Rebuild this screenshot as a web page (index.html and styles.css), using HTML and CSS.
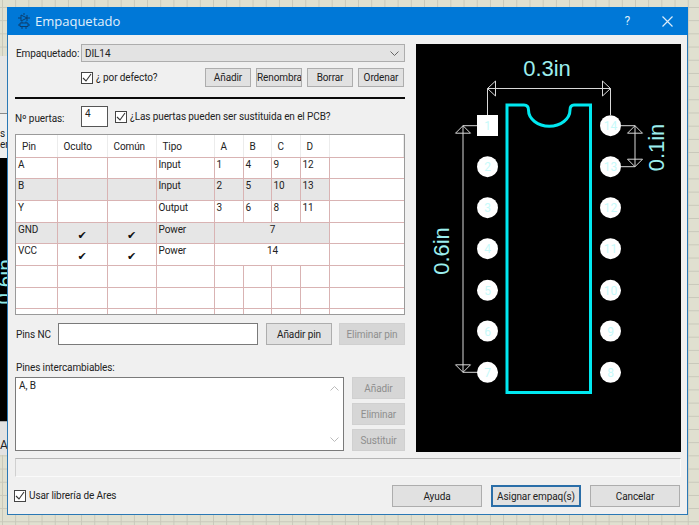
FILE: index.html
```html
<!DOCTYPE html>
<html lang="es">
<head>
<meta charset="utf-8">
<title>Empaquetado</title>
<link rel="stylesheet" href="styles.css">
</head>
<body>
<div class="desktop">
  <div class="bg-panel"></div>
  <div class="bg-labels"><span>s</span><span>era</span></div>
  <div class="bg-canvas"><span class="bg-dim">0.6in</span></div>
  <div class="bg-toolbar">A</div>

  <div class="window">
    <header class="titlebar">
      <svg class="app-icon" width="12" height="16" viewBox="0 0 12 16" aria-hidden="true">
        <path d="M6 0v2M0 5h3M9 5h3M3 2v6l6-3zM9 2v6M0 12h2M10 12h2M2 10h8v3.500H2zM4 8.500V10M8 8.500V10M4 13.500V16M8 13.500V16" fill="none" stroke="#0c3f6e" stroke-width="1"/>
      </svg>
      <span class="title">Empaquetado</span>
      <span class="help">?</span>
      <svg class="close" width="11" height="11" viewBox="0 0 11 11" aria-hidden="true"><path d="M.5.5l10 10M10.500.5l-10 10" stroke="#dcecf9" stroke-width="1.200"/></svg>
    </header>

    <div class="body">
      <section class="left">
        <div class="row-combo">
          <label class="lbl-combo">Empaquetado:</label>
          <div class="combo">
            <span>DIL14</span>
            <svg width="9" height="5" viewBox="0 0 9 5" aria-hidden="true"><path d="M.5.5l4 4 4-4" fill="none" stroke="#666"/></svg>
          </div>
        </div>
        <div class="row-default">
          <span class="check"><svg width="10" height="10" viewBox="0 0 10 10"><path d="M1 5l3 3 5-7" fill="none" stroke="#333" stroke-width="1.100"/></svg></span>
          <span class="check-text">¿ por defecto?</span>
          <div class="btns-top">
            <button class="btn">Añadir</button>
            <button class="btn">Renombra</button>
            <button class="btn">Borrar</button>
            <button class="btn">Ordenar</button>
          </div>
        </div>
        <hr class="rule">
        <div class="row-gates">
          <span class="lbl-gates">Nº puertas:</span>
          <div class="num-input">4</div>
          <span class="check"><svg width="10" height="10" viewBox="0 0 10 10"><path d="M1 5l3 3 5-7" fill="none" stroke="#333" stroke-width="1.100"/></svg></span>
          <span class="check-text">¿Las puertas pueden ser sustituida en el PCB?</span>
        </div>

        <div class="grid-box">
          <table class="pins">
            <colgroup>
              <col class="c-pin"><col class="c-flag"><col class="c-flag2"><col class="c-type">
              <col class="c-n"><col class="c-n2"><col class="c-n"><col class="c-n"><col>
            </colgroup>
            <thead>
              <tr><th>Pin</th><th>Oculto</th><th>Común</th><th>Tipo</th><th>A</th><th>B</th><th>C</th><th>D</th><th></th></tr>
            </thead>
            <tbody>
              <tr><td>A</td><td></td><td></td><td>Input</td><td>1</td><td>4</td><td>9</td><td>12</td><td class="blank"></td></tr>
              <tr class="alt"><td>B</td><td></td><td></td><td>Input</td><td>2</td><td>5</td><td>10</td><td>13</td><td class="blank"></td></tr>
              <tr><td>Y</td><td></td><td></td><td>Output</td><td>3</td><td>6</td><td>8</td><td>11</td><td class="blank"></td></tr>
              <tr class="alt"><td>GND</td><td class="tick">✔</td><td class="tick">✔</td><td>Power</td><td colspan="4" class="span">7</td><td class="blank"></td></tr>
              <tr><td>VCC</td><td class="tick">✔</td><td class="tick">✔</td><td>Power</td><td colspan="4" class="span">14</td><td class="blank"></td></tr>
              <tr><td></td><td></td><td></td><td></td><td></td><td></td><td></td><td></td><td class="blank"></td></tr>
              <tr><td></td><td></td><td></td><td></td><td></td><td></td><td></td><td></td><td class="blank"></td></tr>
              <tr class="stub"><td></td><td></td><td></td><td></td><td></td><td></td><td></td><td></td><td class="blank"></td></tr>
            </tbody>
          </table>
        </div>

        <div class="row-nc">
          <span class="lbl-nc">Pins NC</span>
          <div class="nc-input"></div>
          <button class="btn btn-pin">Añadir pin</button>
          <button class="btn btn-pin off">Eliminar pin</button>
        </div>

        <div class="lbl-swap">Pines intercambiables:</div>
        <div class="row-swap">
          <div class="swap-list">
            <span>A, B</span>
            <div class="scroll">
              <svg width="9" height="5" viewBox="0 0 9 5" aria-hidden="true"><path d="M.5 4.500l4-4 4 4" fill="none" stroke="#bbb"/></svg>
              <svg width="9" height="5" viewBox="0 0 9 5" aria-hidden="true"><path d="M.5.5l4 4 4-4" fill="none" stroke="#bbb"/></svg>
            </div>
          </div>
          <div class="swap-btns">
            <button class="btn off">Añadir</button>
            <button class="btn off">Eliminar</button>
            <button class="btn off">Sustituir</button>
          </div>
        </div>
      </section>

      <section class="preview">
        <svg class="pcb" width="265" height="408" viewBox="416 44 265 408" role="img" aria-label="Vista previa DIL14">
          <g class="dim">
            <path d="M487.500 115V88.500H610.500V115M463 125.700H477M463 125.700V372.300M463 372.300H477M621 125.700H635V166.700H621"/>
            <path d="M487.500 88.500l8-7.500v15zM610.500 88.500l-8-7.500v15zM463 125.700l-7.500 7.500h15zM463 372.300l-7.500-7.500h15zM635 125.700l-7.500 7.500h15zM635 166.700l-7.500-7.500h15z"/>
          </g>
          <path class="body-outline" d="M507 392.500V105H524Q528.500 105 528.500 110A20.500 16 0 0 0 570 110Q570 105 574 105H590.500V392.500Z"/>
          <rect class="pad" x="477" y="115" width="21" height="21"/>
          <circle class="pad" cx="487.500" cy="166.700" r="10.500"/>
          <circle class="pad" cx="487.500" cy="207.700" r="10.500"/>
          <circle class="pad" cx="487.500" cy="248.700" r="10.500"/>
          <circle class="pad" cx="487.500" cy="290.300" r="10.500"/>
          <circle class="pad" cx="487.500" cy="331" r="10.500"/>
          <circle class="pad" cx="487.500" cy="372.300" r="10.500"/>
          <circle class="pad" cx="610.500" cy="125.700" r="10.500"/>
          <circle class="pad" cx="610.500" cy="166.700" r="10.500"/>
          <circle class="pad" cx="610.500" cy="207.700" r="10.500"/>
          <circle class="pad" cx="610.500" cy="248.700" r="10.500"/>
          <circle class="pad" cx="610.500" cy="290.300" r="10.500"/>
          <circle class="pad" cx="610.500" cy="331" r="10.500"/>
          <circle class="pad" cx="610.500" cy="372.300" r="10.500"/>
          <g class="pad-num">
            <text x="487.500" y="130">1</text><text x="487.500" y="171">2</text><text x="487.500" y="212">3</text>
            <text x="487.500" y="253">4</text><text x="487.500" y="294.500">5</text><text x="487.500" y="335.500">6</text>
            <text x="487.500" y="376.500">7</text><text x="610.500" y="376.500">8</text><text x="610.500" y="335.500">9</text>
            <text x="610.500" y="294.500">10</text><text x="610.500" y="253">11</text><text x="610.500" y="212">12</text>
            <text x="610.500" y="171">13</text><text x="610.500" y="130">14</text>
          </g>
          <g class="dim-text">
            <text x="547" y="76">0.3in</text>
            <text transform="translate(664 147.500) rotate(-90)">0.1in</text>
            <text transform="translate(449 251) rotate(-90)">0.6in</text>
          </g>
        </svg>
      </section>
    </div>

    <div class="status"></div>

    <footer class="footer">
      <span class="check"><svg width="10" height="10" viewBox="0 0 10 10"><path d="M1 5l3 3 5-7" fill="none" stroke="#333" stroke-width="1.100"/></svg></span>
      <span class="check-text">Usar librería de Ares</span>
      <div class="footer-btns">
        <button class="btn btn-foot">Ayuda</button>
        <button class="btn btn-foot primary">Asignar empaq(s)</button>
        <button class="btn btn-foot">Cancelar</button>
      </div>
    </footer>
  </div>
</div>
</body>
</html>
```
FILE: styles.css
```css
* { box-sizing: border-box; }
html, body { margin: 0; padding: 0; }
body { width: 699px; height: 525px; overflow: hidden; font-family: Roboto, "Liberation Sans", sans-serif; font-size: 10px; letter-spacing: -0.1px; color: #222; }

.desktop {
  position: relative;
  width: 699px;
  height: 525px;
  background-color: #e0e0d0;
  background-image:
    linear-gradient(to right, #c8c8ba 1px, transparent 1px),
    linear-gradient(to bottom, #c8c8ba 1px, transparent 1px);
  background-size: 13.2px 13.2px;
  background-position: 2px 7px;
  overflow: hidden;
}

.bg-panel { position: absolute; left: 0; top: 56px; width: 8px; height: 57px; background: #e6e6e6; }
.bg-labels { position: absolute; left: 0; top: 113px; width: 8px; height: 45px; background: #efefef; border-top: 1px solid #8a8a8a; padding-top: 14px; display: flex; flex-direction: column; line-height: 11px; overflow: hidden; }
.bg-canvas { position: absolute; left: 0; top: 158px; width: 8px; height: 263px; background: #000; overflow: hidden; }
.bg-dim { position: absolute; left: -18px; top: 112px; color: #8fe8e8; font-size: 21px; transform: rotate(-90deg); transform-origin: center; white-space: nowrap; }
.bg-toolbar { position: absolute; left: 0; top: 421px; width: 8px; height: 34px; background: #e2e2e2; border-top: 1px solid #aaa; padding-top: 16px; font-size: 12px; overflow: hidden; }

.window {
  position: absolute;
  left: 7px;
  top: 7px;
  width: 681px;
  height: 508px;
  background: #f0f0f0;
  border: 1px solid #2a78b5;
  border-top: 0;
  display: flex;
  flex-direction: column;
}

.titlebar {
  height: 28px;
  flex: none;
  margin: 0 -1px;
  background: #0078d7;
  display: flex;
  align-items: center;
  padding: 0 15px 0 11px;
  color: #fff;
}
.app-icon { flex: none; }
.title { margin-left: 5px; font-family: "Open Sans", sans-serif; font-size: 13px; letter-spacing: 0; color: #e2f0fb; }
.help { margin-left: auto; margin-right: 32px; font-size: 12px; color: #dcecf9; }
.close { flex: none; }

.body { display: flex; gap: 11px; padding: 9px 6px 0 7px; flex: none; height: 417px; }
.left { width: 390px; flex: none; display: flex; flex-direction: column; }
.preview { width: 265px; height: 408px; flex: none; background: #000; }
.pcb { display: block; }

.row-combo { display: flex; align-items: center; height: 18px; }
.lbl-combo { width: 66px; padding-left: 1px; flex: none; }
.combo { flex: 1; height: 18px; background: #e3e3e3; border: 1px solid #adadad; display: flex; align-items: center; justify-content: space-between; padding: 0 5px 0 3px; }

.row-default { display: flex; align-items: center; height: 19px; margin-top: 6px; padding-left: 66px; }
.check { width: 12px; height: 12px; flex: none; background: #fff; border: 1px solid #444; display: flex; align-items: center; justify-content: center; }
.check-text { margin-left: 3px; white-space: nowrap; }
.btns-top { margin-left: auto; display: flex; gap: 5px; padding-right: 1px; }

.btn {
  font: inherit;
  letter-spacing: inherit;
  color: #222;
  background: #e1e1e1;
  border: 1px solid #adadad;
  padding: 0;
  white-space: nowrap;
  overflow: hidden;
  text-align: center;
}
.btns-top .btn { width: 46px; height: 19px; }
.btn.off { background: #d6d6d6; color: #8e8e8e; border-color: #d0d0d0; }

.rule { height: 2px; margin: 10px 0 0; border: 0; background: #0a0a0a; flex: none; }

.row-gates { display: flex; align-items: center; height: 21px; margin-top: 7px; }
.lbl-gates { width: 66px; flex: none; padding-top: 4px; }
.num-input { width: 27px; height: 21px; background: #fff; border: 1px solid #555; padding: 1px 3px; flex: none; margin-right: 7px; }

.grid-box { height: 181px; margin-top: 7px; background: #fff; border: 1px solid #9a9a9a; overflow: hidden; flex: none; }
.pins { border-collapse: collapse; table-layout: fixed; width: 388px; }
.c-pin { width: 41px; }
.c-flag { width: 50px; }
.c-flag2 { width: 49px; }
.c-type { width: 58px; }
.c-n { width: 29px; }
.c-n2 { width: 28px; }
.pins th { height: 22px; font-weight: normal; text-align: left; padding: 1px 0 0 6px; border-right: 1px solid #ececec; border-bottom: 1px solid #d9b3b3; }
.pins td { height: 21.7px; padding: 0 0 0 2px; vertical-align: top; border-right: 1px solid #d9b3b3; border-bottom: 1px solid #d9b3b3; line-height: 13px; }
.pins tr.alt td { background: #e6e6e6; }
.pins tr.alt td.blank { background: #fff; }
.pins td.blank { border-right: 0; }
.pins td.tick { text-align: center; padding: 7px 0 0 0; font-family: "DejaVu Sans", sans-serif; font-size: 11px; color: #111; line-height: 11px; }
.pins td.span { text-align: center; }
.pins tr.stub td { border-bottom: 0; }

.row-nc { display: flex; align-items: stretch; height: 22px; margin-top: 8px; }
.lbl-nc { width: 43px; flex: none; padding-left: 1px; align-self: center; }
.nc-input { width: 200px; flex: none; background: #fff; border: 1px solid #7a7a7a; }
.btn-pin { width: 66px; margin-left: 8px; }
.btn-pin.off { margin-left: 7px; }

.lbl-swap { margin-top: 16px; height: 16px; padding-left: 1px; line-height: 13px; }
.row-swap { display: flex; height: 74px; margin-top: 0; gap: 8px; }
.swap-list { width: 329px; background: #fff; border: 1px solid #7a7a7a; padding: 2px 3px; position: relative; flex: none; }
.scroll { position: absolute; top: 8px; bottom: 8px; right: 4px; width: 9px; display: flex; flex-direction: column; justify-content: space-between; }
.scroll svg { display: block; }
.swap-btns { display: flex; flex-direction: column; gap: 4px; width: 53px; flex: none; }
.swap-btns .btn { height: 22px; flex: none; }

.dim path { fill: none; stroke: #d8d8d8; stroke-width: 1; }
.body-outline { fill: none; stroke: #00e8f0; stroke-width: 3; }
.pad { fill: #fff; }
.pad-num text { font-size: 12px; letter-spacing: 0; fill: #c8fafa; text-anchor: middle; }
.dim-text text { font-family: "Liberation Sans", sans-serif; font-size: 22px; letter-spacing: 0; fill: #9ceeee; text-anchor: middle; }

.status { height: 19px; margin: 6px 6px 0 7px; flex: none; border-top: 1px solid #b5b5b5; border-left: 1px solid #d0d0d0; border-right: 1px solid #fafafa; border-bottom: 1px solid #fafafa; background: #f0f0f0; }

.footer { flex: 1; display: flex; align-items: flex-start; padding: 8px 7px 0 6px; }
.footer > .check { margin-top: 5px; }
.footer > .check-text { margin-top: 5px; margin-left: 3px; }
.footer-btns { margin-left: auto; display: flex; gap: 9px; }
.btn-foot { width: 90px; height: 22px; }
.btn-foot.primary { border: 2px solid #2a6ea8; }
```
